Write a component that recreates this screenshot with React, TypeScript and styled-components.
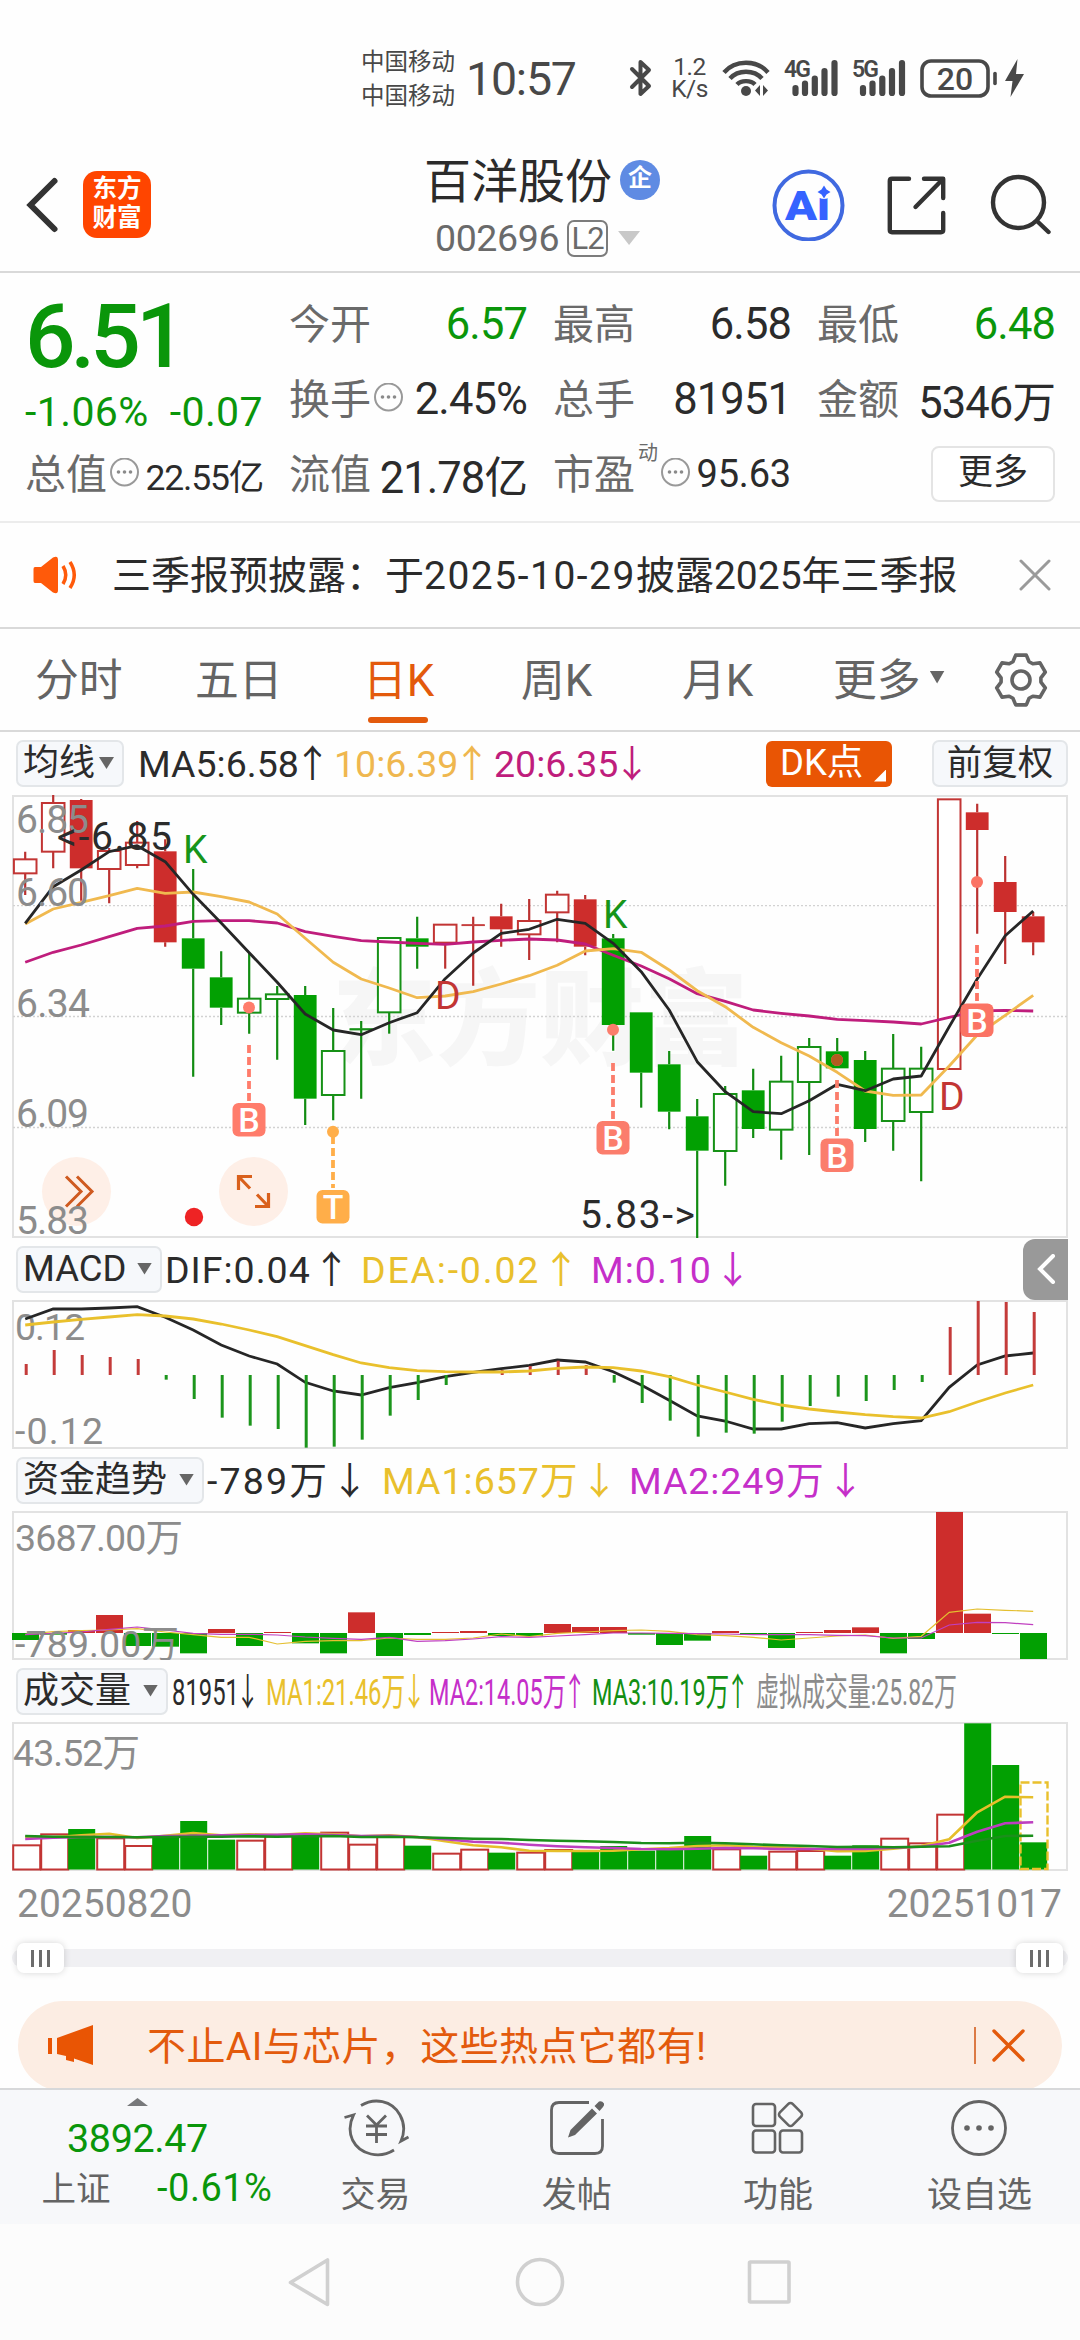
import React from 'react';
import styled, { createGlobalStyle } from 'styled-components';

const GREEN = '#0a960a';
const INK = '#2b2b2b';
const GRAY = '#8c8c8c';
const YELLOW = '#e9c02c';
const PURPLE = '#c52fc9';
const ORANGE = '#e35a0c';

const Global = createGlobalStyle`
  * { box-sizing: border-box; }
  html, body { margin: 0; padding: 0; background: #fff; }
  body { font-family: Roboto, "Noto Sans CJK SC", sans-serif; color: ${INK}; width: 1080px; overflow-x: hidden; }
  svg { display: block; flex: none; }
`;

const Screen = styled.main`
  width: 1080px;
  height: 2340px;
  display: flex;
  flex-direction: column;
  overflow: hidden;
  background: #fefefe;
`;

/* ---------- status bar ---------- */
const StatusBar = styled.header`
  height: 156px;
  flex: none;
  display: flex;
  align-items: center;
  padding: 0 0 0 361px;
  color: #484848;
  > * { flex: none; }
`;
const Carriers = styled.div`
  width: 105px;
  padding-top: 1px;
  font-size: 23.5px;
  line-height: 34px;
  white-space: nowrap;
`;
const Clock = styled.div`
  width: 163px;
  padding-top: 2px;
  font-size: 46.5px;
  letter-spacing: -1.2px;
  white-space: nowrap;
`;
const Speed = styled.div`
  width: 37px;
  margin: 0 12px 0 18px;
  font-size: 24.5px;
  line-height: 22px;
  text-align: center;
  letter-spacing: -0.5px;
`;

/* ---------- title bar ---------- */
const TitleBar = styled.div`
  height: 117px;
  flex: none;
  display: flex;
  align-items: center;
  padding: 0 29px 34px 25px;
  border-bottom: 2px solid #d9d9d9;
`;
const AppLogo = styled.div`
  width: 68px;
  height: 67px;
  margin: 16px 0 0 24px;
  padding-top: 3px;
  border-radius: 14px;
  background: #ff4500;
  color: #fff;
  font-size: 24.5px;
  font-weight: 700;
  line-height: 29px;
  text-align: center;
`;
const TitleBlock = styled.div`
  flex: 1;
  display: flex;
  flex-direction: column;
  padding: 13px 0 0 273px;
`;
const NameLine = styled.div`
  display: flex;
  align-items: center;
  height: 58px;
  font-size: 47px;
  white-space: nowrap;
`;
const Verified = styled.span`
  width: 40px;
  height: 40px;
  margin: 5px 0 0 8px;
  border-radius: 50%;
  background: #5f8be3;
  color: #fff;
  font-size: 24px;
  font-weight: 700;
  line-height: 37px;
  text-align: center;
`;
const CodeLine = styled.div`
  display: flex;
  align-items: center;
  height: 40px;
  margin-top: 12px;
  padding-left: 11px;
  color: #6a6a6a;
  font-size: 37.5px;
  letter-spacing: -0.4px;
`;
const LevelTag = styled.span`
  width: 41px;
  height: 37px;
  margin: 0 10px 0 8px;
  border: 2px solid #7c7c7c;
  border-radius: 7px;
  font-size: 31px;
  line-height: 33px;
  text-align: center;
  letter-spacing: -1px;
`;
const Caret = styled.i<{ $w: number; $h: number; $color?: string; $up?: boolean }>`
  flex: none;
  width: ${p => p.$w}px;
  height: ${p => p.$h}px;
  background: ${p => p.$color ?? '#666'};
  clip-path: ${p => (p.$up ? 'polygon(50% 0, 100% 100%, 0 100%)' : 'polygon(0 0, 100% 0, 50% 100%)')};
`;
const HeaderTools = styled.div`
  display: flex;
  align-items: center;
  padding-top: 17px;
`;

/* ---------- quote grid ---------- */
const Quote = styled.section`
  height: 250px;
  flex: none;
  display: grid;
  grid-template-columns: repeat(4, 238px);
  grid-template-rows: repeat(3, 75px);
  column-gap: 26px;
  padding: 13px 25px 0;
  border-bottom: 2px solid #ececec;
`;
const PriceCell = styled.div`
  grid-row: span 2;
  display: flex;
  flex-direction: column;
  color: ${GREEN};
`;
const Price = styled.div`
  height: 93px;
  font-size: 89px;
  font-weight: 500;
  line-height: 101px;
  letter-spacing: -5px;
`;
const Change = styled.div`
  display: flex;
  justify-content: space-between;
  font-size: 41px;
  line-height: 66px;
  letter-spacing: 0.4px;
`;
const Cell = styled.div`
  display: flex;
  align-items: center;
  white-space: nowrap;
`;
const CellLabel = styled.span`
  padding-bottom: 5px;
  color: #6a6a6a;
  font-size: 41px;
`;
const CellValue = styled.span<{ $green?: boolean; $size?: number; $ls?: number }>`
  margin-left: auto;
  padding-top: 1px;
  color: ${p => (p.$green ? GREEN : INK)};
  font-size: ${p => p.$size ?? 43.5}px;
  letter-spacing: ${p => p.$ls ?? -0.9}px;
`;
const Sup = styled.sup`
  align-self: flex-start;
  width: 20px;
  margin: 3px 0 0 3px;
  color: #6a6a6a;
  font-size: 20px;
  line-height: 28px;
`;
const MoreButton = styled.button`
  width: 124px;
  height: 56px;
  margin-left: auto;
  border: 2px solid #e4e4e4;
  border-radius: 8px;
  background: #fff;
  color: ${INK};
  font: 35px/50px Roboto, "Noto Sans CJK SC", sans-serif;
  padding: 0 0 3px;
`;

/* ---------- notice ---------- */
const Notice = styled.section`
  height: 106px;
  flex: none;
  display: flex;
  align-items: center;
  padding: 0 29px 0 32px;
  border-bottom: 2px solid #d9d9d9;
  font-size: 39px;
  white-space: nowrap;
`;
const NoticeText = styled.span`
  flex: 1;
  margin-left: 33px;
  padding-bottom: 6px;
`;
const NoticeDate = styled.span`
  letter-spacing: 1.5px;
`;

/* ---------- tabs ---------- */
const Tabs = styled.nav`
  height: 103px;
  flex: none;
  display: flex;
  align-items: center;
  padding: 0 33px 0 35px;
  border-bottom: 2px solid #d9d9d9;
`;
const Tab = styled.div<{ $w: number; $active?: boolean }>`
  position: relative;
  flex: none;
  width: ${p => p.$w}px;
  height: 100%;
  display: flex;
  align-items: center;
  gap: 9px;
  padding-bottom: 5px;
  color: ${p => (p.$active ? ORANGE : '#646464')};
  font-size: 43.8px;
  white-space: nowrap;
  &::after {
    content: '';
    display: ${p => (p.$active ? 'block' : 'none')};
    position: absolute;
    left: 5px;
    bottom: 7px;
    width: 60px;
    height: 6px;
    border-radius: 3px;
    background: ${ORANGE};
  }
`;

/* ---------- indicator legends ---------- */
const Arrow = styled.span`
  margin: 0 -5px;
`;
const Legend = styled.div<{ $h?: number; $loose?: boolean }>`
  height: ${p => p.$h ?? 62}px;
  flex: none;
  display: flex;
  align-items: center;
  padding: 0 12px 0 16px;
  font-size: 37.5px;
  white-space: nowrap;
  ${Arrow} { margin-left: ${p => (p.$loose ? 2 : -5)}px; }
`;
const Picker = styled.button<{ $w: number; $size?: number; $center?: boolean }>`
  flex: none;
  width: ${p => p.$w}px;
  height: 47px;
  display: flex;
  align-items: center;
  justify-content: ${p => (p.$center ? 'center' : 'space-between')};
  padding: 0 ${p => (p.$center ? 0 : 8)}px 1px ${p => (p.$center ? 0 : 5)}px;
  border: 2px solid #e3e6e9;
  border-radius: 7px;
  background: #f6f8fb;
  color: ${INK};
  font: ${p => p.$size ?? 36}px/40px Roboto, "Noto Sans CJK SC", sans-serif;
  white-space: nowrap;
`;
const Series = styled.span<{ $w: number; $color: string; $ls?: number; $gap?: number }>`
  flex: none;
  width: ${p => p.$w}px;
  margin-left: ${p => p.$gap ?? 0}px;
  padding-bottom: 6px;
  color: ${p => p.$color};
  letter-spacing: ${p => p.$ls ?? 0}px;
  white-space: nowrap;
`;
const Condensed = styled.span<{ $k?: number }>`
  display: inline-block;
  transform: scaleX(${p => p.$k ?? 0.635});
  transform-origin: left center;
`;
const DkButton = styled.button`
  display: flex;
  align-items: center;
  justify-content: space-between;
  width: 126px;
  height: 46px;
  margin: 0 40px 0 auto;
  padding: 0 6px 1px 14px;
  border: 0;
  border-radius: 6px;
  background: #e95504;
  color: #fff;
  font: 36.5px/40px Roboto, "Noto Sans CJK SC", sans-serif;
`;
const Corner = styled.i`
  align-self: flex-end;
  width: 12px;
  height: 12px;
  margin-bottom: 4px;
  background: #fff;
  clip-path: polygon(100% 0, 100% 100%, 0 100%);
`;
const DrawerHandle = styled.div`
  width: 45px;
  height: 61px;
  margin-left: auto;
  display: flex;
  align-items: center;
  justify-content: center;
  border-radius: 12px 0 0 12px;
  background: #999;
`;

/* ---------- dates, slider, banner ---------- */
const Dates = styled.div`
  height: 63px;
  flex: none;
  display: flex;
  justify-content: space-between;
  align-items: center;
  padding: 2px 18px 0 17px;
  color: ${GRAY};
  font-size: 39px;
`;
const Slider = styled.div`
  height: 50px;
  flex: none;
  display: flex;
  align-items: center;
  padding: 0 12px 2px;
`;
const Track = styled.div`
  flex: 1;
  height: 18px;
  display: flex;
  align-items: center;
  justify-content: space-between;
  padding: 0 5px;
  border-radius: 9px;
  background: #f0f0f3;
`;
const Grip = styled.div`
  width: 47px;
  height: 30px;
  display: flex;
  align-items: center;
  justify-content: center;
  gap: 5px;
  border-radius: 7px;
  background: #fff;
  box-shadow: 0 0 7px rgba(0, 0, 0, 0.16);
  i { width: 3px; height: 17px; background: #6c6c6c; }
`;
const BannerArea = styled.div`
  height: 104px;
  flex: none;
  padding: 17px 18px 0;
  overflow: hidden;
`;
const Banner = styled.div`
  height: 90px;
  display: flex;
  align-items: center;
  padding: 0 37px 2px 30px;
  border-radius: 45px;
  background: #fcede3;
  color: ${ORANGE};
  font-size: 39px;
  white-space: nowrap;
`;
const BannerText = styled.span`
  flex: 1;
  margin-left: 52px;
  padding-bottom: 5px;
  letter-spacing: 0.4px;
`;
const BannerRule = styled.i`
  width: 2px;
  height: 37px;
  margin-right: 16px;
  background: #dc7a45;
`;

/* ---------- bottom navigation ---------- */
const BottomNav = styled.nav`
  height: 136px;
  flex: none;
  display: flex;
  border-top: 2px solid #d7d8da;
  background: #f7f8fa;
`;
const IndexCard = styled.div`
  width: 275px;
  display: flex;
  flex-direction: column;
  align-items: center;
  padding: 8px 0 0;
  color: ${GREEN};
  font-size: 39.5px;
`;
const IndexValue = styled.div`
  height: 50px;
  margin-top: 8px;
  line-height: 50px;
  letter-spacing: -0.4px;
`;
const IndexRow = styled.div`
  width: 231px;
  display: flex;
  justify-content: space-between;
  align-items: center;
  height: 48px;
  margin-left: 39px;
  font-size: 38px;
  letter-spacing: 0.5px;
`;
const IndexName = styled.span`
  padding-bottom: 4px;
  color: #646464;
  font-size: 34.5px;
  letter-spacing: 0;
`;
const NavItem = styled.div`
  width: 201.3px;
  display: flex;
  flex-direction: column;
  align-items: center;
  gap: 14px;
  padding-top: 8px;
  color: #646464;
  font-size: 35px;
  line-height: 48px;
`;
const SystemBar = styled.footer`
  height: 116px;
  flex: none;
  display: flex;
  justify-content: center;
  background: #fcfcfc;
`;

/* ---------- small icons ---------- */
const Dots = () => (
  <svg width="32" height="32" viewBox="0 0 32 32">
    <circle cx="17.5" cy="14" r="13.5" fill="none" stroke="#999" strokeWidth="2" />
    {[11.5, 17.5, 23.5].map(x => <circle key={x} cx={x} cy="14" r="1.8" fill="#8a8a8a" />)}
  </svg>
);
const Close = ({ size, color, w }: { size: number; color: string; w: number }) => (
  <svg width={size} height={size} viewBox={`0 0 ${size} ${size}`} stroke={color} strokeWidth={w} strokeLinecap="round">
    <path d={`M2 2L${size - 2} ${size - 2}M${size - 2} 2L2 ${size - 2}`} />
  </svg>
);
const gearPoints = Array.from({ length: 6 }, (_, k) =>
  [[-24, 20], [-12, 25.5], [12, 25.5], [24, 20]].map(([a, r]) => {
    const t = ((k * 60 + a - 90) * Math.PI) / 180;
    return `${(28 + r * Math.cos(t)).toFixed(1)},${(28 + r * Math.sin(t)).toFixed(1)}`;
  }).join(' ')
).join(' ');

/* ---------- chart data (three units per pixel) ---------- */
type Candle = [string, number, number, number, number];
const candles: Candle[] = [
  ['r', 238, 280, 215, 345], ['r', 69, 215, 45, 265], ['R', 60, 265, 57, 362], ['r', 213, 267, 204, 370],
  ['r', 188, 255, 123, 265], ['R', 214, 487, 178, 500], ['G', 475, 566, 267, 890], ['G', 592, 683, 514, 735],
  ['g', 656, 698, 518, 761], ['g', 643, 657, 618, 839], ['G', 645, 956, 618, 1035], ['g', 813, 945, 684, 1021],
  ['g', 746, 750, 723, 956], ['g', 474, 697, 474, 761], ['G', 475, 500, 410, 566], ['r', 434, 488, 434, 566],
  ['r', 434, 437, 410, 617], ['R', 409, 448, 371, 500], ['r', 423, 463, 357, 540], ['r', 344, 397, 332, 487],
  ['R', 358, 500, 345, 526], ['G', 475, 735, 462, 812], ['G', 697, 878, 697, 983], ['G', 853, 995, 813, 1048],
  ['G', 1009, 1112, 957, 1374], ['g', 942, 1113, 918, 1217], ['G', 931, 1047, 866, 1074], ['g', 905, 1049, 827, 1139],
  ['g', 801, 906, 774, 1125], ['G', 814, 865, 774, 865], ['G', 840, 1047, 813, 1086], ['g', 866, 1023, 762, 1112],
  ['g', 866, 996, 800, 1204], ['r', 58, 867, 58, 867], ['R', 97, 150, 71, 461], ['R', 306, 396, 228, 552],
  ['R', 409, 487, 396, 526],
];
const ma5 = [430, 320, 270, 215, 197, 245, 343, 429, 518, 607, 702, 750, 764, 728, 698, 596, 519, 460, 448, 418, 430, 490, 575, 690, 845, 935, 995, 1001, 962, 913, 932, 897, 888, 740, 597, 467, 393];
const ma10 = [432, 387, 367, 347, 325, 340, 336, 350, 366, 402, 475, 547, 597, 624, 653, 648, 635, 612, 587, 556, 513, 506, 517, 570, 632, 680, 742, 788, 828, 877, 933, 946, 945, 858, 765, 706, 646];
const ma20 = [547, 517, 495, 470, 445, 438, 424, 422, 422, 429, 455, 469, 482, 486, 490, 493, 486, 481, 477, 480, 492, 526, 558, 596, 641, 664, 690, 700, 708, 718, 722, 726, 732, 712, 693, 691, 693];
const macdBars = [402, 360, 375, 381, 387, 449, 507, 563, 587, 597, 653, 650, 629, 557, 510, 465, 435, 420, 408, 392, 405, 458, 519, 572, 620, 608, 611, 575, 528, 500, 513, 480, 456, 291, 213, 216, 246];
const dif = [267, 237, 237, 234, 230, 262, 300, 345, 378, 402, 457, 483, 495, 473, 458, 440, 427, 416, 406, 390, 396, 425, 465, 511, 558, 573, 597, 597, 581, 578, 594, 581, 572, 472, 405, 378, 369];
const dea = [285, 276, 268, 261, 254, 258, 267, 282, 300, 320, 347, 374, 399, 413, 422, 425, 426, 426, 423, 415, 411, 413, 423, 440, 465, 486, 508, 525, 537, 546, 554, 560, 564, 545, 516, 489, 465];
const fund = [1230, 1214, 1200, 1155, 1248, 1250, 1270, 1197, 1248, 1206, 1240, 1270, 1147, 1278, 1215, 1206, 1203, 1218, 1218, 1182, 1191, 1191, 1214, 1245, 1232, 1203, 1214, 1254, 1206, 1200, 1192, 1270, 1227, 846, 1151, 1212, 1287];
const fundMa1 = [1213, 1205, 1202, 1200, 1196, 1206, 1214, 1222, 1222, 1242, 1234, 1232, 1232, 1224, 1228, 1228, 1224, 1212, 1220, 1210, 1206, 1202, 1200, 1204, 1214, 1217, 1222, 1230, 1224, 1218, 1215, 1225, 1219, 1147, 1137, 1141, 1144];
const fundMa2 = [1214, 1210, 1206, 1198, 1191, 1200, 1210, 1213, 1213, 1215, 1221, 1225, 1228, 1222, 1234, 1232, 1227, 1220, 1222, 1218, 1214, 1209, 1209, 1210, 1211, 1212, 1214, 1214, 1214, 1216, 1217, 1224, 1224, 1185, 1177, 1178, 1184];
const volumes = [583, 550, 537, 562, 585, 563, 513, 569, 569, 552, 560, 545, 581, 556, 587, 608, 596, 608, 605, 597, 602, 588, 602, 598, 558, 595, 617, 602, 600, 617, 586, 563, 577, 491, 220, 345, 577];
const volumeKinds = 'rrgrrgggrrgrrrgrrgrrgggggrgrrggrrrggg';
const volMa1 = [560, 562, 556, 551, 564, 557, 549, 556, 553, 555, 550, 553, 559, 556, 561, 574, 586, 592, 602, 603, 603, 602, 598, 594, 588, 586, 590, 592, 596, 604, 603, 596, 588, 568, 487, 440, 442];
const volMa2 = [567, 563, 561, 561, 562, 558, 557, 556, 555, 554, 553, 555, 558, 557, 561, 568, 575, 578, 584, 589, 592, 594, 597, 598, 596, 594, 595, 597, 597, 597, 597, 593, 590, 578, 545, 520, 517];
const volMa3 = [558, 560, 561, 561, 562, 561, 560, 560, 559, 560, 559, 558, 561, 560, 562, 564, 566, 567, 570, 572, 574, 576, 579, 580, 578, 580, 583, 586, 588, 591, 590, 592, 590, 589, 572, 558, 557];

const cx = (i: number) => 25.2 + i * 28;
const trace = (base: number, values: number[]) =>
  values.map((v, i) => `${i ? 'L' : 'M'}${cx(i).toFixed(1)} ${(base + v / 3).toFixed(1)}`).join('');

const Frame = ({ top, height }: { top: number; height: number }) => (
  <rect x="13" y={top} width="1054" height={height} fill="none" stroke="#e2e2e2" strokeWidth="2" />
);
const AxisText = ({ x, y, w, children, color = GRAY, size = 39 }: { x: number; y: number; w: number; children: string; color?: string; size?: number }) => (
  <text x={x} y={y} textLength={w} fill={color} fontSize={size}>{children}</text>
);
const Signal = ({ x, dot, from, to, letter, color }: { x: number; dot: number; from: number; to: number; letter: string; color: string }) => (
  <g>
    <circle cx={x} cy={dot} r="6" fill={color} />
    <path d={`M${x} ${from}V${to}`} stroke={color} strokeWidth="3.8" strokeDasharray="8 4" />
    <rect x={x - 16.5} y={to + 2} width="33" height="33.5" rx="6" fill={color} />
    <text x={x} y={to + 31} textAnchor="middle" fontSize="34" fontWeight="500" fill="#fff">{letter}</text>
  </g>
);

const CandleChart = () => (
  <svg width="1080" height="443" viewBox="0 795 1080 443">
    <text x="332" y="1057" textLength="416" fontSize="104" fontWeight="900" fill="#f6f6f6">东方财富</text>
    <Frame top={796} height={441} />
    {[905.7, 1016.5, 1127.5].map(y => (
      <path key={y} d={`M13 ${y}H1067`} stroke="#d2d2d2" strokeWidth="1.3" strokeDasharray="2 2" />
    ))}
    {candles.map(([kind, top, bottom, high, low], i) => {
      const filled = kind === kind.toUpperCase();
      const red = kind.toLowerCase() === 'r';
      const color = red ? (filled ? '#cd2d2c' : '#c23534') : filled ? '#02a002' : '#169116';
      const wick = red ? '#bb3130' : '#118c11';
      const x = cx(i);
      const h = (bottom - top) / 3;
      return (
        <g key={i}>
          <path d={`M${x} ${780 + high / 3}V${780 + top / 3}M${x} ${780 + bottom / 3}V${780 + low / 3}`} stroke={wick} strokeWidth="2.2" />
          {filled
            ? <rect x={x - 11.4} y={780 + top / 3} width="22.8" height={h} fill={color} />
            : <rect x={x - 11.3} y={780 + top / 3} width="22.6" height={h} fill={h > 3 ? '#fff' : color} stroke={color} strokeWidth={h > 3 ? 2 : 0.8} />}
        </g>
      );
    })}
    <g fill="none" strokeWidth="2.8" strokeLinejoin="round">
      <path d={trace(780, ma20)} stroke="#bf1d7c" />
      <path d={trace(780, ma10)} stroke="#f0b94f" />
      <path d={trace(780, ma5)} stroke="#262626" />
    </g>
    <Signal x={249} dot={1007.5} from={1045} to={1101} letter="B" color="#ff7c6b" />
    <Signal x={613} dot={1029.7} from={1063} to={1119} letter="B" color="#fb7d6c" />
    <Signal x={837} dot={1060} from={1080} to={1136.5} letter="B" color="#fb7d6c" />
    <circle cx="837" cy="1060" r="6" fill="#b35b20" />
    <Signal x={977} dot={882} from={945} to={1001.5} letter="B" color="#fb7364" />
    <Signal x={333} dot={1131.7} from={1136} to={1188} letter="T" color="#ffae49" />
    <circle cx="76.5" cy="1191.5" r="34.5" fill="#feefe7" />
    <path d="M66 1176.5L81 1191.5L66 1206.5M77 1176.5L92 1191.5L77 1206.5" fill="none" stroke="#cf5a20" strokeWidth="3" />
    <circle cx="253.5" cy="1191.5" r="34.5" fill="#feefe7" />
    <g fill="none" stroke="#d9601c" strokeWidth="3.2">
      <path d="M238.5 1190V1176.5H252M239 1177L250 1188.5" />
      <path d="M268.5 1193V1206.5H255M268 1206L257 1194.5" />
    </g>
    <circle cx="194" cy="1217" r="9.2" fill="#ee2324" />
    <AxisText x={16} y={832.5} w={73}>6.85</AxisText>
    <AxisText x={16} y={905.5} w={73}>6.60</AxisText>
    <AxisText x={16} y={1016.5} w={74}>6.34</AxisText>
    <AxisText x={16} y={1126.5} w={73}>6.09</AxisText>
    <AxisText x={16} y={1234} w={73}>5.83</AxisText>
    <AxisText x={57} y={850} w={115} color={INK}>&lt;-6.85</AxisText>
    <AxisText x={580} y={1228} w={115} color={INK}>5.83-&gt;</AxisText>
    <text x="183" y="863" fontSize="39" fill="#16951a">K</text>
    <text x="603" y="928" fontSize="39" fill="#16951a">K</text>
    <text x="435" y="1009" fontSize="39" fill="#c23534">D</text>
    <text x="939" y="1110" fontSize="39" fill="#c23534">D</text>
  </svg>
);

const MacdChart = () => (
  <svg width="1080" height="149" viewBox="0 1300 1080 149">
    <Frame top={1301} height={147} />
    <AxisText x={15} y={1340} w={70} size={37.5}>0.12</AxisText>
    <AxisText x={15} y={1444} w={88} size={37.5}>-0.12</AxisText>
    <path d={trace(1230, dif)} fill="none" stroke="#262626" strokeWidth="2.8" />
    {macdBars.map((v, i) => v !== 435 && (
      <path key={i} d={`M${cx(i) + 1} 1375V${1230 + v / 3}`} stroke={v < 435 ? '#c43b3a' : '#1c951c'} strokeWidth="3" />
    ))}
    <path d={trace(1230, dea)} fill="none" stroke="#e9c02c" strokeWidth="2.8" />
  </svg>
);

const FundChart = () => (
  <svg width="1080" height="149" viewBox="0 1511 1080 149">
    <Frame top={1512} height={147} />
    {fund.map((v, i) => (
      <rect key={i} x={cx(i) - 13.2} y={1230 + Math.min(v, 1209) / 3} width="27" height={Math.abs(v - 1209) / 3}
        fill={v < 1209 ? '#cd2d2c' : '#02a002'} />
    ))}
    <g fill="none" strokeWidth="1.2">
      <path d={trace(1230, fundMa1)} stroke="#e4bf30" />
      <path d={trace(1230, fundMa2)} stroke="#c040c0" />
    </g>
    <AxisText x={15} y={1551} w={168} size={37.5}>3687.00万</AxisText>
    <AxisText x={15} y={1657} w={164} size={37.5}>-789.00万</AxisText>
  </svg>
);

const VolumeChart = () => (
  <svg width="1080" height="149" viewBox="0 1722 1080 149">
    <Frame top={1723} height={147} />
    {volumes.map((v, i) => {
      const y = 1650 + v / 3;
      return volumeKinds[i] === 'r'
        ? <rect key={i} x={cx(i) - 12} y={y + 1} width="27" height={1868.5 - y} fill="#fff" stroke="#c23534" strokeWidth="2" />
        : <rect key={i} x={cx(i) - 13} y={y} width="27" height={1869.5 - y} fill="#02a002" />;
    })}
    <rect x="1020.500" y="1782.500" width="27" height="86.500" fill="none" stroke="#e9c02c" strokeWidth="2.4" strokeDasharray="9 3" />
    <g fill="none" strokeWidth="2.6" strokeLinejoin="round">
      <path d={trace(1650, volMa1)} stroke="#e6bf2a" />
      <path d={trace(1650, volMa2)} stroke="#bd3fc0" />
      <path d={trace(1650, volMa3)} stroke="#1b8f1b" />
    </g>
    <AxisText x={13} y={1766} w={127} size={37.5}>43.52万</AxisText>
  </svg>
);

const Up = () => <Arrow>↑</Arrow>;
const Down = () => <Arrow>↓</Arrow>;
const signalBars = [[795.5, 88], [805, 83.5], [814.8, 78.5], [824.5, 71], [834.5, 63]];

export default function App() {
  return (
    <Screen>
      <Global />
      <StatusBar>
        <Carriers>中国移动<br />中国移动</Carriers>
        <Clock>10:57</Clock>
        <svg width="24" height="40" viewBox="0 0 24 40" fill="none" stroke="#484848" strokeWidth="4" strokeLinejoin="round" strokeLinecap="round">
          <path d="M3 11L20 28L11.500 36V4L20 12L3 29" />
        </svg>
        <Speed>1.2<br />K/s</Speed>
        <svg width="310" height="40" viewBox="720 58 310 40">
          <g transform="translate(721 58)">
            <g fill="none" stroke="#484848" strokeWidth="4.4">
              <path d="M3 14.500C14 1.500 36 1.500 47 14.500" />
              <path d="M9 20.500C17 11.500 33 11.500 41 20.500" />
              <path d="M16 26.500C20 22 30 22 34 26.500" />
            </g>
            <circle cx="25" cy="33" r="5" fill="#484848" />
            <path d="M39 27v11l-5-5.500zM42 27v11l5-5.500z" fill="#484848" />
          </g>
          <g stroke="#484848" strokeWidth="6.2" strokeLinecap="round">
            {[0, 67.5].map(o => signalBars.map(([x, y]) => (
              <path key={`${o}-${x}`} d={`M${x + o} ${y}V93`} />
            )))}
          </g>
          <g fill="#484848" fontSize="23" fontWeight="600">
            <text x="784" y="77" textLength="27">4G</text>
            <text x="852" y="77" textLength="27">5G</text>
          </g>
          <rect x="922" y="61" width="66" height="35" rx="9" fill="none" stroke="#484848" strokeWidth="3.6" />
          <text x="955" y="89.500" textAnchor="middle" fontSize="32" fontWeight="500" fill="#484848">20</text>
          <path d="M995 73.500v10" stroke="#484848" strokeWidth="3.6" strokeLinecap="round" />
          <path d="M1017.500 59L1005 81h7.500l-2 16L1024 74h-8z" fill="#484848" />
        </svg>
      </StatusBar>

      <TitleBar>
        <svg width="34" height="74" viewBox="0 0 34 74" fill="none" stroke="#333" strokeWidth="6" strokeLinecap="round" strokeLinejoin="miter">
          <path d="M29.500 21L5.500 45L29.500 69" />
        </svg>
        <AppLogo>东方<br />财富</AppLogo>
        <TitleBlock>
          <NameLine>百洋股份<Verified>企</Verified></NameLine>
          <CodeLine>002696<LevelTag>L2</LevelTag><Caret $w={22} $h={14} $color="#c8c8c8" /></CodeLine>
        </TitleBlock>
        <HeaderTools>
          <svg width="280" height="72" viewBox="771 169 280 72">
            <circle cx="808.500" cy="205.500" r="34" fill="none" stroke="#4069e0" strokeWidth="4" />
            <text x="785" y="219.500" fontSize="41" fontWeight="900" fill="#3563ff" textLength="45" lengthAdjust="spacingAndGlyphs">Ai</text>
            <circle cx="824" cy="191" r="8" fill="#fefefe" />
            <path d="M824 185.500l2.500 4 4 2.500-4 2.500-2.500 4-2.500-4-4-2.500 4-2.500z" fill="#3563ff" />
            <g fill="none" stroke="#333" strokeWidth="4.4" strokeLinecap="round" strokeLinejoin="round">
              <path d="M909 178.800H892q-2.200 0-2.200 2.200V230q0 2.200 2.200 2.200H941q2.200 0 2.200-2.200V213" />
              <path d="M924 178.800H943.200V198M942 180L915.500 207" />
              <circle cx="1018.500" cy="202.500" r="25.500" />
              <path d="M1037.500 221.500L1048.500 232" />
            </g>
          </svg>
        </HeaderTools>
      </TitleBar>

      <Quote>
        <PriceCell>
          <Price>6.51</Price>
          <Change><span>-1.06%</span><span>-0.07</span></Change>
        </PriceCell>
        <Cell><CellLabel>今开</CellLabel><CellValue $green>6.57</CellValue></Cell>
        <Cell><CellLabel>最高</CellLabel><CellValue>6.58</CellValue></Cell>
        <Cell><CellLabel>最低</CellLabel><CellValue $green>6.48</CellValue></Cell>
        <Cell><CellLabel>换手</CellLabel><Dots /><CellValue>2.45%</CellValue></Cell>
        <Cell><CellLabel>总手</CellLabel><CellValue>81951</CellValue></Cell>
        <Cell><CellLabel>金额</CellLabel><CellValue>5346万</CellValue></Cell>
        <Cell><CellLabel>总值</CellLabel><Dots /><CellValue $size={35.5} $ls={-1.2}>22.55亿</CellValue></Cell>
        <Cell><CellLabel>流值</CellLabel><CellValue>21.78亿</CellValue></Cell>
        <Cell><CellLabel>市盈</CellLabel><Sup>动</Sup><Dots /><CellValue $size={38} $ls={-0.2}>95.63</CellValue></Cell>
        <Cell><MoreButton>更多</MoreButton></Cell>
      </Quote>

      <Notice>
        <svg width="47" height="40" viewBox="0 0 47 40">
          <path d="M3 12H9L21 2.500Q26 0 26 5V35Q26 40 21 37.500L9 28H3Q1.500 28 1.500 26V14Q1.500 12 3 12Z" fill="#ff5a0a" />
          <path d="M31 11Q36.500 20 31 29M38 7Q46.500 20 38 33" fill="none" stroke="#ff5a0a" strokeWidth="3.5" />
        </svg>
        <NoticeText>三季报预披露：于<NoticeDate>2025-10-29</NoticeDate>披露2025年三季报</NoticeText>
        <Close size={32} color="#9a9a9a" w={3} />
      </Notice>

      <Tabs>
        <Tab $w={160}>分时</Tab>
        <Tab $w={168}>五日</Tab>
        <Tab $w={158} $active>日K</Tab>
        <Tab $w={161}>周K</Tab>
        <Tab $w={151}>月K</Tab>
        <Tab $w={160}>更多<Caret $w={15} $h={13} /></Tab>
        <svg width="56" height="56" viewBox="0 0 56 56" fill="none" stroke="#646464" strokeWidth="3.6" strokeLinejoin="round">
          <polygon points={gearPoints} />
          <circle cx="28" cy="28" r="9" />
        </svg>
      </Tabs>

      <Legend $h={63}>
        <Picker $w={108}>均线<Caret $w={15} $h={12} /></Picker>
        <Series $w={196} $gap={14} $color={INK}>MA5:6.58<Up /></Series>
        <Series $w={160} $color="#efb74f">10:6.39<Up /></Series>
        <Series $w={160} $color="#bf1d7c">20:6.35<Down /></Series>
        <DkButton>DK点<Corner /></DkButton>
        <Picker $w={136} $size={35.5} $center>前复权</Picker>
      </Legend>
      <CandleChart />

      <Legend $loose>
        <Picker $w={146} $size={36.5}>MACD<Caret $w={15} $h={12} /></Picker>
        <Series $w={196} $gap={3} $ls={1} $color={INK}>DIF:0.04<Up /></Series>
        <Series $w={230} $ls={1.8} $color={YELLOW}>DEA:-0.02<Up /></Series>
        <Series $w={160} $ls={1} $color={PURPLE}>M:0.10<Down /></Series>
        <DrawerHandle>
          <svg width="20" height="30" viewBox="0 0 20 30" fill="none" stroke="#fff" strokeWidth="4" strokeLinecap="round">
            <path d="M17 2L4 15L17 28" />
          </svg>
        </DrawerHandle>
      </Legend>
      <MacdChart />

      <Legend $loose>
        <Picker $w={188}>资金趋势<Caret $w={15} $h={12} /></Picker>
        <Series $w={175} $gap={3} $ls={2.2} $color={INK}>-789万<Down /></Series>
        <Series $w={247} $ls={1} $color={YELLOW}>MA1:657万<Down /></Series>
        <Series $w={240} $ls={0.9} $color={PURPLE}>MA2:249万<Down /></Series>
      </Legend>
      <FundChart />

      <Legend>
        <Picker $w={152}>成交量<Caret $w={15} $h={12} /></Picker>
        <Series $w={94} $gap={4} $color={INK}><Condensed>81951<Down /></Condensed></Series>
        <Series $w={163} $color={YELLOW}><Condensed>MA1:21.46万<Down /></Condensed></Series>
        <Series $w={163} $color={PURPLE}><Condensed $k={0.625}>MA2:14.05万<Up /></Condensed></Series>
        <Series $w={164} $color="#128f12"><Condensed $k={0.625}>MA3:10.19万<Up /></Condensed></Series>
        <Series $w={200} $color={GRAY}><Condensed $k={0.612}>虚拟成交量:25.82万</Condensed></Series>
      </Legend>
      <VolumeChart />

      <Dates><span>20250820</span><span>20251017</span></Dates>
      <Slider>
        <Track>
          <Grip><i /><i /><i /></Grip>
          <Grip><i /><i /><i /></Grip>
        </Track>
      </Slider>

      <BannerArea>
        <Banner>
          <svg width="47" height="42" viewBox="0 0 47 42" fill="#e95504">
            <path d="M0 14h4v16H0zM9 14L45 1V41L26 34.500V38L18 36V32L9 30z" />
          </svg>
          <BannerText>不止AI与芯片，这些热点它都有!</BannerText>
          <BannerRule />
          <Close size={33} color={ORANGE} w={3.4} />
        </Banner>
      </BannerArea>

      <BottomNav>
        <IndexCard>
          <Caret $w={21} $h={8} $color="#77787a" $up />
          <IndexValue>3892.47</IndexValue>
          <IndexRow><IndexName>上证</IndexName><span>-0.61%</span></IndexRow>
        </IndexCard>
        <NavItem>
          <svg width="68" height="60" viewBox="341 2098 68 60" fill="none" stroke="#646464" strokeWidth="2.8">
            <path d="M360 2105.500C373 2097.500 391 2100 399 2115C404 2124 403.500 2133 400 2141L407.500 2137" />
            <path d="M393 2150C379 2159 359 2155 351.500 2140C347.500 2131 348.500 2123 352.500 2115L343.500 2117.500" />
            <path d="M366 2115.500L375.500 2125L385 2115.500M375.500 2125V2143M365 2126H386M365 2134.500H386" />
          </svg>
          交易
        </NavItem>
        <NavItem>
          <svg width="60" height="60" viewBox="547 2098 60 60">
            <path d="M589 2102.500H559Q551.500 2102.500 551.500 2110V2146Q551.500 2153.500 559 2153.500H595Q602.500 2153.500 602.500 2146V2119" fill="none" stroke="#646464" strokeWidth="2.8" />
            <path d="M592 2108.500L597 2113.500L575 2135L568 2137.500L570.500 2130ZM594.500 2106L599 2101.500Q602 2100.500 604 2103.500Q604.500 2105 603 2107L599.500 2111Z" fill="#646464" />
          </svg>
          发帖
        </NavItem>
        <NavItem>
          <svg width="60" height="60" viewBox="749 2098 60 60" fill="none" stroke="#646464" strokeWidth="2.6">
            <rect x="754" y="2104" width="22" height="22" rx="3" />
            <rect x="754" y="2130.500" width="22" height="22" rx="3" />
            <rect x="781" y="2130.500" width="22" height="22" rx="3" />
            <rect x="782.500" y="2105.500" width="18" height="18" rx="3" transform="rotate(45 791.500 2114.500)" />
          </svg>
          功能
        </NavItem>
        <NavItem>
          <svg width="60" height="60" viewBox="949 2098 60 60">
            <circle cx="979" cy="2128" r="26.500" fill="none" stroke="#646464" strokeWidth="2.8" />
            {[967, 979, 991].map(x => <circle key={x} cx={x} cy="2128" r="2.8" fill="#646464" />)}
          </svg>
          设自选
        </NavItem>
      </BottomNav>

      <SystemBar>
        <svg width="504" height="116" viewBox="288 2224 504 116" fill="none" stroke="#d0d0d0" strokeWidth="3.6" strokeLinejoin="round">
          <path d="M327.500 2260V2304.500L290.500 2282.500Z" />
          <circle cx="540" cy="2282" r="22.500" />
          <rect x="749.500" y="2262" width="39.500" height="40" rx="1" />
        </svg>
      </SystemBar>
    </Screen>
  );
}
